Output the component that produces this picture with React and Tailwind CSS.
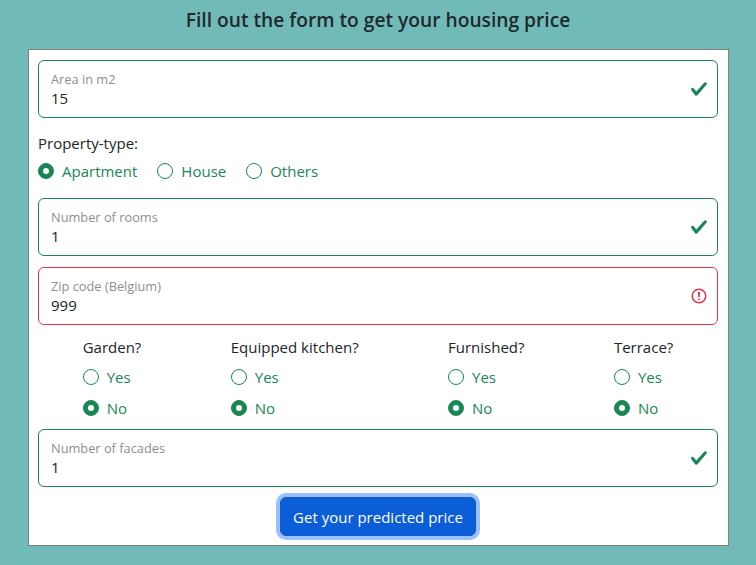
import React from "react";

const font = { fontFamily: '"Open Sans", "Noto Sans", sans-serif' };

function CheckIcon() {
  return (
    <svg width="18" height="18" viewBox="0 0 8 8">
      <path
        fill="#198754"
        d="M2.3 6.73.6 4.53c-.4-1.04.46-1.4 1.1-.8l1.1 1.4 3.4-3.8c.6-.63 1.6-.27 1.2.7l-4 4.6c-.43.5-.8.4-1.1.1z"
      />
    </svg>
  );
}

function AlertIcon() {
  return (
    <svg width="18" height="18" viewBox="0 0 12 12" fill="none" stroke="#dc3545">
      <circle cx="6" cy="6" r="4.5" />
      <path strokeLinejoin="round" d="M5.8 3.6h.4L6 6.5z" />
      <circle cx="6" cy="8.2" r=".6" fill="#dc3545" stroke="none" />
    </svg>
  );
}

function Field({ label, value, valid = true, className = "" }) {
  return (
    <div
      className={`flex h-[58px] items-center justify-between rounded-[6px] border bg-white pl-[12px] pr-[9px] ${
        valid ? "border-[#198754]" : "border-[#dc3545]"
      } ${className}`}
    >
      <div className="flex h-full flex-col pt-[9px]">
        <div className="text-[12.8px] leading-[18px] text-[#8c8f92]">{label}</div>
        <div className="text-[15px] leading-[20px] text-[#212529]">{value}</div>
      </div>
      {valid ? <CheckIcon /> : <AlertIcon />}
    </div>
  );
}

function Radio({ checked, label, className = "" }) {
  return (
    <div className={`flex h-[24px] items-center ${className}`}>
      <span
        className={`flex h-4 w-4 items-center justify-center rounded-full border border-[#198754] ${
          checked ? "bg-[#198754]" : "bg-white"
        }`}
      >
        {checked && <span className="h-[6px] w-[6px] rounded-full bg-white" />}
      </span>
      <span className="ml-2 text-[15px] leading-[24px] text-[#198754]">{label}</span>
    </div>
  );
}

function YesNo({ title }) {
  return (
    <div className="flex flex-col">
      <div className="text-[15px] leading-[24px] text-[#212529]">{title}</div>
      <Radio label="Yes" className="mt-[6px]" />
      <Radio label="No" checked className="mt-[7px]" />
    </div>
  );
}

export default function App() {
  return (
    <div className="min-h-[565px] w-full bg-[#70bbb8]" style={font}>
      <h1 className="h-[49px] pt-[5px] text-center text-[19.2px] font-semibold leading-[30px] text-[#22292c]">
        Fill out the form to get your housing price
      </h1>
      <div className="ml-[28px] flex w-[701px] flex-col border border-[#808080] bg-white pb-[9px] pl-[9px] pr-[10px] pt-[10px]">
        <Field label="Area in m2" value="15" />
        <div className="mt-[13px] text-[15px] leading-[24px] text-[#212529]">Property-type:</div>
        <div className="mt-[4px] flex gap-[20px]">
          <Radio checked label="Apartment" />
          <Radio label="House" />
          <Radio label="Others" />
        </div>
        <Field label="Number of rooms" value="1" className="mt-[15px]" />
        <Field label="Zip code (Belgium)" value="999" valid={false} className="mt-[11px]" />
        <div className="mt-[10px] flex justify-around">
          <YesNo title="Garden?" />
          <YesNo title="Equipped kitchen?" />
          <YesNo title="Furnished?" />
          <YesNo title="Terrace?" />
        </div>
        <Field label="Number of facades" value="1" className="mt-[9px]" />
        <div className="mt-[10px] flex justify-center">
          <button className="h-[39px] rounded-[6px] border border-[#0a58ca] bg-[#0b5ed7] px-[12px] text-[15px] leading-[24px] text-white shadow-[0_0_0_4px_#98c1fe]">
            Get your predicted price
          </button>
        </div>
      </div>
    </div>
  );
}
